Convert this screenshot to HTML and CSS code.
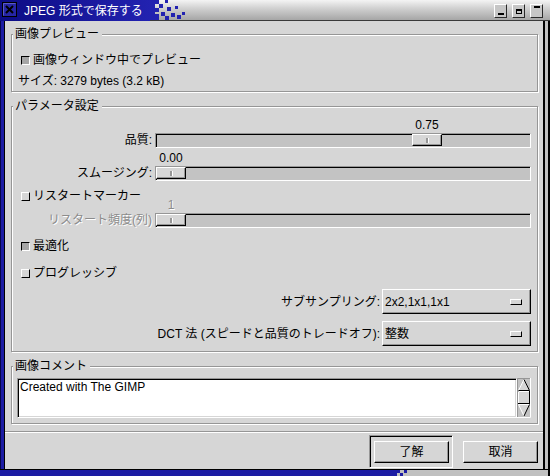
FILE: index.html
```html
<!DOCTYPE html>
<html lang="ja">
<head>
<meta charset="utf-8">
<title>JPEG 形式で保存する</title>
<link rel="stylesheet" href="styles.css">
</head>
<body>
<div class="window">
  <div class="titlebar">
    <div class="title-blue">
      <svg class="close-box" width="15" height="15" viewBox="0 0 15 15">
        <rect x="0.5" y="0.5" width="14" height="14" fill="#2626a6" stroke="#000"/>
        <path d="M1.5 13.5V1.5H13.5" stroke="#5a5ac8" fill="none"/>
        <path d="M4 4L11 11M11 4L4 11" stroke="#000" stroke-width="2"/>
      </svg>
      <span class="title-text">JPEG 形式で保存する</span>
    </div>
    <svg class="dither" width="36" height="21" viewBox="0 0 36 21">
      <g fill="#2222b0">
        <rect x="0" y="0" width="5" height="20"/>
        <rect x="5" y="0" width="4" height="4"/>
        <rect x="5" y="8" width="4" height="4"/>
        <rect x="5" y="14" width="4" height="6"/>
        <rect x="9" y="4" width="4" height="4"/>
        <rect x="11" y="12" width="4" height="4"/>
        <rect x="15" y="0" width="3" height="3"/>
        <rect x="17" y="7" width="4" height="4"/>
        <rect x="15" y="16" width="4" height="4"/>
        <rect x="21" y="13" width="4" height="4"/>
        <rect x="25" y="6" width="3" height="3"/>
        <rect x="27" y="15" width="4" height="4"/>
        <rect x="32" y="12" width="3" height="3"/>
      </g>
    </svg>
    <div class="wbtns">
      <span class="wbtn"><span class="ico-min"></span></span>
      <span class="wbtn"><span class="ico-max"></span></span>
      <span class="wbtn"><span class="ico-shade"></span></span>
    </div>
  </div>

  <div class="middle">
    <div class="edge-left"></div>
    <div class="content">

      <div class="frame frame-preview">
        <div class="frame-title">画像プレビュー</div>
        <div class="check-row m-preview"><span class="check on"></span><span>画像ウィンドウ中でプレビュー</span></div>
        <div class="size-row">サイズ: 3279 bytes (3.2 kB)</div>
      </div>

      <div class="frame frame-params">
        <div class="frame-title">パラメータ設定</div>

        <div class="scale-row m-quality">
          <div class="scale-label">品質:</div>
          <div class="scale">
            <div class="scale-value" style="margin-left:257px">0.75</div>
            <div class="trough"><div class="thumb" style="margin-left:256px"></div></div>
          </div>
        </div>

        <div class="scale-row m-smooth">
          <div class="scale-label">スムージング:</div>
          <div class="scale">
            <div class="scale-value" style="margin-left:1px">0.00</div>
            <div class="trough"><div class="thumb" style="margin-left:0px"></div></div>
          </div>
        </div>

        <div class="check-row m-restart"><span class="check off"></span><span>リスタートマーカー</span></div>

        <div class="scale-row m-freq disabled">
          <div class="scale-label">リスタート頻度(列)</div>
          <div class="scale">
            <div class="scale-value" style="margin-left:1px">1</div>
            <div class="trough"><div class="thumb" style="margin-left:0px"></div></div>
          </div>
        </div>

        <div class="check-row m-opt"><span class="check on"></span><span>最適化</span></div>
        <div class="check-row m-prog"><span class="check off"></span><span>プログレッシブ</span></div>

        <div class="option-row m-sub">
          <span class="option-label">サブサンプリング:</span>
          <div class="option"><span class="option-text">2x2,1x1,1x1</span><span class="option-ind"></span></div>
        </div>
        <div class="option-row m-dct">
          <span class="option-label">DCT 法 (スピードと品質のトレードオフ):</span>
          <div class="option"><span class="option-text">整数</span><span class="option-ind"></span></div>
        </div>
      </div>

      <div class="frame frame-comment">
        <div class="frame-title">画像コメント</div>
        <div class="comment-row">
          <div class="comment-text">Created with The GIMP</div>
          <svg class="vscroll" width="14" height="40" viewBox="0 0 14 40">
            <rect width="14" height="40" fill="#c3c3c3"/>
            <path d="M0.5 40V0.5H14" fill="none" stroke="#969696"/>
            <path d="M13.5 0V39.5H0" fill="none" stroke="#fff"/>
            <polygon points="7,1.5 12.5,12.5 1.5,12.5" fill="#d6d6d6"/>
            <path d="M1.5 12.5L7 1.5" stroke="#fff" fill="none"/>
            <path d="M7 1.5L12.5 12.5H1.5" stroke="#000" fill="none"/>
            <rect x="1.5" y="13.5" width="11" height="12" fill="#d6d6d6" stroke="#000"/>
            <path d="M1.5 25V13.5H12" stroke="#fff" fill="none"/>
            <polygon points="1.5,26.5 12.5,26.5 7,38" fill="#d6d6d6"/>
            <path d="M7 38L1.5 26.5H12.5" stroke="#fff" fill="none"/>
            <path d="M12.5 26.5L7 38" stroke="#000" fill="none"/>
          </svg>
        </div>
      </div>

      <div class="separator"></div>

      <div class="button-row">
        <div class="default-frame"><div class="btn">了解</div></div>
        <div class="btn btn-cancel">取消</div>
      </div>

    </div>
    <div class="edge-right"></div>
  </div>

  <div class="bottom">
    <div class="bottom-blue"></div>
    <svg class="bottom-dither" width="17" height="6" viewBox="0 0 17 6">
      <g fill="#1c1ca4">
        <rect x="0" y="0" width="4" height="6"/>
        <rect x="4" y="0" width="3" height="3"/>
        <rect x="7" y="3" width="3" height="3"/>
        <rect x="11" y="0" width="3" height="3"/>
      </g>
    </svg>
    <div class="bottom-gray"></div>
  </div>
</div>
</body>
</html>
```

FILE: styles.css
```css
* {
  box-sizing: border-box;
}

html,
body {
  margin: 0;
  padding: 0;
}

body {
  width: 550px;
  height: 476px;
  overflow: hidden;
  background: #000;
  font-family: "Liberation Sans", "Noto Sans CJK JP", sans-serif;
  font-size: 12px;
  color: #000;
}

.window {
  width: 550px;
  height: 476px;
  display: flex;
  flex-direction: column;
}

/* ---------- title bar ---------- */
.titlebar {
  height: 21px;
  flex: none;
  display: flex;
  align-items: flex-start;
  padding-right: 7px;
  background: linear-gradient(#f4f4f4 0, #d2d2d2 8px, #a6a6a6 20px, #3a3a3a 20px);
}

.title-blue {
  width: 150px;
  height: 21px;
  display: flex;
  align-items: flex-start;
  padding: 2px 0 0 2px;
  background: linear-gradient(to right, #0c0c84, #2222b0);
  color: #fff;
}

.close-box {
  display: block;
  flex: none;
}

.title-text {
  margin-left: 7px;
  line-height: 19px;
  white-space: nowrap;
}

.dither {
  display: block;
  flex: none;
}

.wbtns {
  margin-left: auto;
  margin-top: 4px;
  display: flex;
  gap: 5px;
}

.wbtn {
  width: 13px;
  height: 14px;
  display: flex;
  align-items: center;
  justify-content: center;
  border: 1px solid;
  border-color: #fff #2a2a2a #2a2a2a #fff;
  background: #c6c6c6;
}

.ico-min {
  width: 6px;
  height: 2px;
  background: #000;
  align-self: flex-end;
  margin-bottom: 2px;
}

.ico-max {
  width: 6px;
  height: 5px;
  border: 1px solid #000;
  border-top-width: 2px;
}

.ico-shade {
  width: 6px;
  height: 2px;
  background: #000;
  align-self: flex-start;
  margin-top: 1px;
}

/* ---------- window body ---------- */
.middle {
  height: 448px;
  flex: none;
  display: flex;
}

.edge-left {
  width: 5px;
  background: linear-gradient(to right, #06064a 0 1px, #1c1ca4 1px 4px, #000 4px);
}

.edge-right {
  width: 7px;
  background: linear-gradient(to right, #000 0 2px, #c0c0c0 2px 5px, #000 5px);
}

.content {
  width: 538px;
  background: #d6d6d6;
  display: flex;
  flex-direction: column;
}

.bottom {
  flex: 1;
  display: flex;
  border-top: 1px solid #000;
}

.bottom-blue {
  width: 393px;
  background: #1c1ca4;
}

.bottom-dither {
  display: block;
  background: #c0c0c0;
}

.bottom-gray {
  flex: 1;
  background: #c0c0c0;
  border-right: 2px solid #000;
}

/* ---------- frames ---------- */
.frame {
  margin-left: 6px;
  margin-right: 5px;
  padding-left: 6px;
  padding-right: 6px;
  border: 1px solid #969696;
  box-shadow: inset 1px 1px 0 #fff, 1px 1px 0 #fff;
  display: flex;
  flex-direction: column;
}

.frame-title {
  align-self: flex-start;
  margin: -8px 0 0 -5px;
  padding: 0 3px 0 2px;
  line-height: 14px;
  background: #d6d6d6;
  white-space: nowrap;
}

.frame-preview {
  margin-top: 13px;
  padding-bottom: 3px;
}

.frame-params {
  margin-top: 14px;
  padding-bottom: 5px;
}

.frame-comment {
  margin-top: 14px;
  padding-bottom: 5px;
}

/* ---------- rows ---------- */
.check-row {
  height: 14px;
  line-height: 14px;
  display: flex;
  align-items: center;
  padding-left: 3px;
  white-space: nowrap;
}

.check {
  width: 9px;
  height: 9px;
  flex: none;
  margin-right: 3px;
  border: 1px solid;
}

.check.on {
  border-color: #000 #fff #fff #000;
  background: #a6a6a6;
}

.check.off {
  border-color: #fff #000 #000 #fff;
  background: #d6d6d6;
}

.size-row {
  margin-top: 7px;
  line-height: 14px;
  white-space: nowrap;
}

.m-preview { margin-top: 12px; }
.m-quality { margin-top: 5px; }
.m-smooth { margin-top: 3px; }
.m-restart { margin-top: 8px; }
.m-freq { margin-top: -5px; }
.m-opt { margin-top: 11px; }
.m-prog { margin-top: 13px; }
.m-sub { margin-top: 9px; }
.m-dct { margin-top: 7px; }

/* ---------- scales ---------- */
.scale-row {
  display: flex;
  align-items: flex-end;
}

.scale-label {
  width: 134px;
  flex: none;
  text-align: right;
  line-height: 15px;
  white-space: nowrap;
}

.scale {
  width: 376px;
  margin-left: 3px;
  display: flex;
  flex-direction: column;
}

.scale-value {
  width: 30px;
  height: 15px;
  line-height: 15px;
  text-align: center;
}

.trough {
  height: 15px;
  border: 1px solid;
  border-color: #969696 #fff #fff #969696;
  box-shadow: inset 1px 1px 0 #000;
  background: #c3c3c3;
}

.thumb {
  width: 30px;
  height: 12px;
  border: 1px solid;
  border-color: #fff #000 #000 #fff;
  box-shadow: inset -1px -1px 0 #969696;
  background: #d6d6d6;
  display: flex;
  align-items: center;
  justify-content: center;
}

.thumb::after {
  content: "";
  width: 2px;
  height: 5px;
  background: #969696;
  border-right: 1px solid #fff;
}

.disabled .scale-label,
.disabled .scale-value {
  color: #8c8c8c;
  text-shadow: 1px 1px 0 #fff;
}

/* ---------- option menus ---------- */
.option-row {
  height: 25px;
  display: flex;
  justify-content: flex-end;
  align-items: center;
  white-space: nowrap;
}

.option-label {
  margin-right: 2px;
  line-height: 14px;
}

.option {
  width: 149px;
  height: 25px;
  display: flex;
  align-items: center;
  padding-left: 2px;
  border: 1px solid;
  border-color: #fff #000 #000 #fff;
  box-shadow: inset -1px -1px 0 #969696;
  background: #d6d6d6;
  line-height: 14px;
}

.option-text {
  flex: 1;
}

.option-ind {
  width: 12px;
  height: 6px;
  margin-right: 8px;
  border: 1px solid;
  border-color: #fff #000 #000 #fff;
}

/* ---------- comment ---------- */
.comment-row {
  margin-top: 5px;
  margin-left: -1px;
  height: 40px;
  display: flex;
}

.comment-text {
  width: 500px;
  height: 40px;
  padding: 1px 0 0 2px;
  line-height: 14px;
  background: #fff;
  border: 1px solid;
  border-color: #969696 #fff #fff #969696;
  box-shadow: inset 1px 1px 0 #000, inset -1px -1px 0 #d6d6d6;
  white-space: nowrap;
}

.vscroll {
  display: block;
  flex: none;
}

/* ---------- action area ---------- */
.separator {
  margin-top: 7px;
  height: 2px;
  border-top: 1px solid #969696;
  border-bottom: 1px solid #fff;
}

.button-row {
  margin-top: 2px;
  padding-right: 5px;
  display: flex;
  justify-content: flex-end;
  align-items: flex-start;
}

.default-frame {
  width: 84px;
  height: 33px;
  padding: 5px 3px 4px 4px;
  border: 1px solid;
  border-color: #969696 #fff #fff #969696;
  box-shadow: inset 1px 1px 0 #000;
}

.btn {
  width: 75px;
  height: 22px;
  display: flex;
  align-items: center;
  justify-content: center;
  line-height: 14px;
  border: 1px solid;
  border-color: #fff #000 #000 #fff;
  box-shadow: inset -1px -1px 0 #969696;
  background: #d6d6d6;
}

.btn-cancel {
  margin-left: 10px;
  margin-top: 6px;
}
```
